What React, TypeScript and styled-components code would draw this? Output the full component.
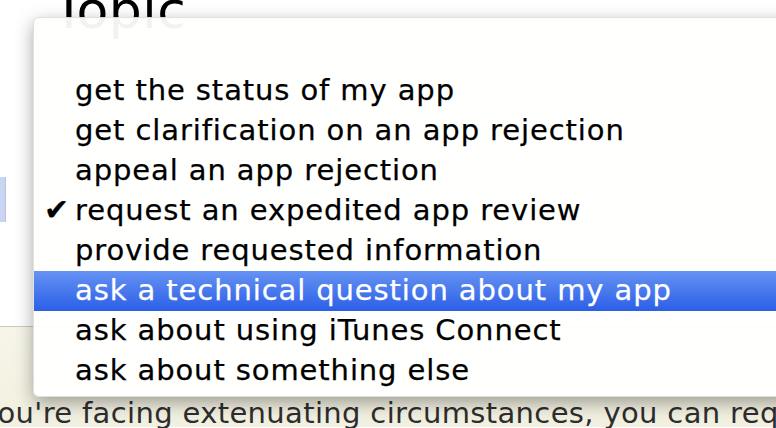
import React from 'react';
import styled, { createGlobalStyle } from 'styled-components';

const GlobalStyle = createGlobalStyle`
    html, body {
        margin: 0;
        padding: 0;
        overflow: hidden;
    }
`;

const Page = styled.div`
    position: relative;
    width: 776px;
    height: 428px;
    overflow: hidden;
    background: #ffffff;
    font-family: "DejaVu Sans", "Liberation Sans", sans-serif;
`;

const Title = styled.h1`
    margin: -22px 0 0 53px;
    font-size: 52px;
    font-weight: normal;
    letter-spacing: 0.5px;
    line-height: 64px;
    color: #000;
`;

const FieldRow = styled.div`
    height: 284px;
    display: flex;
    align-items: flex-start;
    padding-top: 135px;
    box-sizing: border-box;
`;

const SelectEdge = styled.div`
    width: 5px;
    height: 45px;
    background: #c9d5f1;
    border-right: 1px solid #b3c2e6;
`;

const Footer = styled.div`
    border-top: 1px solid #c9c9c0;
    height: 100px;
    background: linear-gradient(#f6f5e8, #f2f0e0);
`;

const Paragraph = styled.p`
    margin: 0;
    padding-top: 69px;
    margin-left: -20px;
    font-size: 29px;
    letter-spacing: 0.35px;
    white-space: nowrap;
    color: #2e2e2e;
`;

const Menu = styled.ul`
    position: absolute;
    top: 17px;
    left: 33px;
    width: 780px;
    height: 380px;
    margin: 0;
    padding: 53px 0 0;
    box-sizing: border-box;
    list-style: none;
    background: rgba(255, 255, 254, 0.95);
    border: 1px solid rgba(0, 0, 0, 0.12);
    border-radius: 6px;
    box-shadow: 0 6px 18px rgba(0, 0, 0, 0.35);
`;

const Item = styled.li<{ active?: boolean }>`
    position: relative;
    height: 40px;
    line-height: 38px;
    padding-left: 41px;
    font-size: 29px;
    letter-spacing: 0.9px;
    -webkit-text-stroke: 0.25px currentColor;
    white-space: nowrap;
    color: ${(p) => (p.active ? '#fff' : '#000')};
    background: ${(p) => (p.active ? 'linear-gradient(#6592f3, #2b5fe7)' : 'transparent')};
`;

const Check = styled.span`
    position: absolute;
    left: 10px;
    top: 0;
    font-size: 30px;
    letter-spacing: 0;
`;

const topics = [
    'get the status of my app',
    'get clarification on an app rejection',
    'appeal an app rejection',
    'request an expedited app review',
    'provide requested information',
    'ask a technical question about my app',
    'ask about using iTunes Connect',
    'ask about something else',
];

const App = () => (
    <Page>
        <GlobalStyle />
        <Title>Topic</Title>
        <FieldRow>
            <SelectEdge />
        </FieldRow>
        <Footer>
            <Paragraph>you're facing extenuating circumstances, you can request an expedited review.</Paragraph>
        </Footer>
        <Menu>
            {topics.map((topic, i) => (
                <Item key={topic} active={i === 5}>
                    {i === 3 && <Check>✔</Check>}
                    {topic}
                </Item>
            ))}
        </Menu>
    </Page>
);

export default App;
